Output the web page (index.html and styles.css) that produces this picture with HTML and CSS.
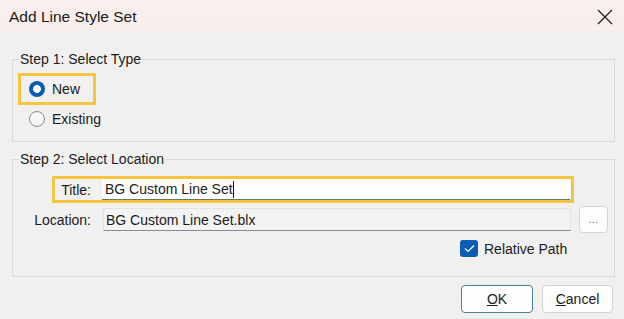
FILE: index.html
```html
<!DOCTYPE html>
<html>
<head>
<meta charset="utf-8">
<link rel="stylesheet" href="styles.css">
</head>
<body>
<div class="dialog">
  <div class="titlebar">
    <span class="title">Add Line Style Set</span>
    <svg class="close" width="16" height="16" viewBox="0 0 16 16"><path d="M1 1 L15 15 M15 1 L1 15" stroke="#222" stroke-width="1.3" fill="none"/></svg>
  </div>
  <fieldset class="group g1">
    <legend>Step 1: Select Type</legend>
    <div class="hl hl-new">
      <span class="radio on"></span><span class="lbl">New</span>
    </div>
    <div class="radio-row">
      <span class="radio"></span><span class="lbl">Existing</span>
    </div>
  </fieldset>
  <fieldset class="group g2">
    <legend>Step 2: Select Location</legend>
    <div class="hl hl-title">
      <span class="flabel short">Title:</span>
      <div class="input focus"><span class="caret">BG Custom Line Set</span></div>
    </div>
    <div class="loc-row">
      <span class="flabel long">Location:</span>
      <div class="input ro">BG Custom Line Set.blx</div>
      <div class="dots">...</div>
    </div>
    <div class="check-row">
      <span class="check"><svg width="11" height="9" viewBox="0 0 11 9"><path d="M1 4.5 L4 7.5 L10 1.5" stroke="#fff" stroke-width="1.2" fill="none"/></svg></span>
      <span class="lbl">Relative Path</span>
    </div>
  </fieldset>
  <div class="buttons">
    <div class="btn default"><u>O</u>K</div>
    <div class="btn"><u>C</u>ancel</div>
  </div>
</div>
</body>
</html>
```
FILE: styles.css
```css
html, body {
  margin: 0;
  padding: 0;
  background: #f0f0f0;
}
body {
  width: 624px;
  height: 319px;
  overflow: hidden;
  font-family: "Liberation Sans", Arial, sans-serif;
  font-size: 14px;
  color: #1b1b1b;
}
.titlebar {
  height: 36px;
  display: flex;
  align-items: center;
  justify-content: space-between;
  padding: 0 11px 0 9px;
  background: linear-gradient(#faefed 0%, #f8eeec 65%, #f1f0f0 100%);
}
.title {
  font-size: 15.5px;
  color: #1a1a1a;
  margin-top: -2px;
}
.close {
  display: block;
  margin-top: -2px;
}
.group {
  margin: 0 9px 0 12px;
  padding: 0;
  border: 1px solid #d9d9d9;
  min-width: 0;
}
.g1 { margin-top: 15px; padding-bottom: 14px; }
.g2 { margin-top: 9px; padding-bottom: 19px; }
legend {
  margin-left: 6px;
  padding: 0 1px;
  line-height: 16px;
  font-size: 14px;
}
.hl {
  border: 3px solid #f5c443;
  box-sizing: border-box;
  display: flex;
  align-items: center;
}
.hl-new {
  margin: 6px 0 0 5px;
  width: 78px;
  height: 32px;
  padding-left: 8px;
}
.radio-row {
  margin: 6px 0 0 16px;
  height: 16px;
  display: flex;
  align-items: center;
}
.radio {
  width: 16px;
  height: 16px;
  border-radius: 50%;
  box-sizing: border-box;
  border: 1px solid #8b8b8b;
  background: #f7f7f7;
  margin-right: 7px;
  flex: none;
}
.radio.on {
  border: none;
  background: radial-gradient(circle, #ffffff 0 3.6px, #0b5cb3 4.2px);
}
.lbl { line-height: 16px; }
.hl-title {
  margin: 9px 0 0 39px;
  width: 522px;
  height: 27px;
}
.flabel {
  text-align: right;
  flex: none;
}
.short { width: 36px; margin-right: 11px; }
.long { width: 78px; margin-right: 12px; }
.input {
  width: 468px;
  box-sizing: border-box;
  padding-left: 3px;
  flex: none;
  display: flex;
  align-items: center;
}
.input.focus {
  height: 21px;
  background: #ffffff;
  border-bottom: 1px solid #5e7d63;
}
.caret {
  border-right: 1px solid #111;
  padding-right: 0;
  line-height: 17px;
}
.loc-row {
  margin-top: 3px;
  display: flex;
  align-items: center;
  height: 27px;
}
.input.ro {
  height: 23px;
  background: #f3f3f3;
  border: 1px solid #e3e3e3;
  border-bottom: 1px solid #8a8a8a;
  padding-left: 2px;
}
.dots {
  margin-left: 8px;
  width: 29px;
  height: 27px;
  box-sizing: border-box;
  background: #fdfdfd;
  border: 1px solid #d6d6d6;
  border-radius: 4px;
  font-size: 10px;
  color: #555;
  display: flex;
  align-items: center;
  justify-content: center;
  letter-spacing: 0.5px;
}
.check-row {
  margin: 7px 0 0 447px;
  height: 17px;
  display: flex;
  align-items: center;
}
.check {
  width: 18px;
  height: 17px;
  border-radius: 3px;
  background: #0b5cb3;
  display: flex;
  align-items: center;
  justify-content: center;
  margin-right: 6px;
}
.check svg { display: block; }
.buttons {
  margin-top: 8px;
  display: flex;
  justify-content: flex-end;
  gap: 9px;
  padding-right: 11px;
}
.btn {
  width: 71px;
  height: 28px;
  box-sizing: border-box;
  background: #fdfdfd;
  border: 1px solid #d2d2d2;
  border-radius: 4px;
  display: flex;
  align-items: center;
  justify-content: center;
  font-size: 14px;
}
.btn.default {
  width: 72px;
  border-color: #4b8099;
}
```
